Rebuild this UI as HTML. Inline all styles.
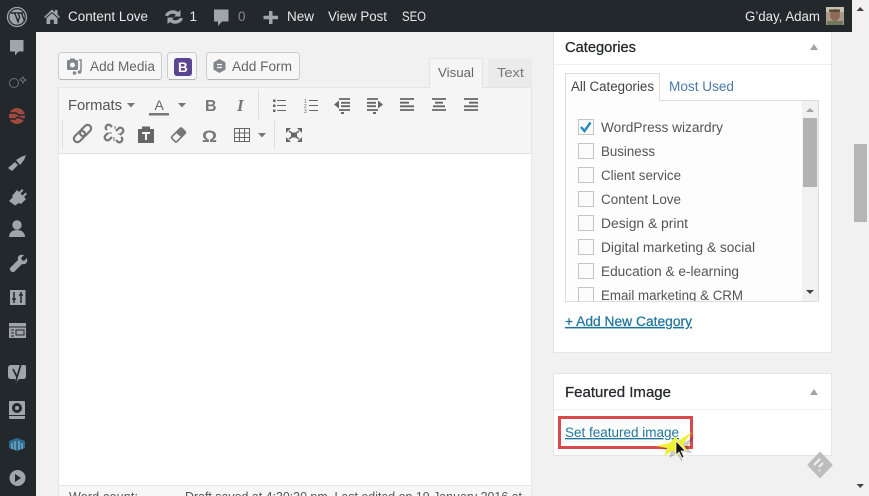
<!DOCTYPE html>
<html><head><meta charset="utf-8"><title>Edit Post</title>
<style>
html,body{margin:0;padding:0;width:869px;height:496px;overflow:hidden;background:#f1f1f1}
svg{display:block}
text{font-family:"Liberation Sans",sans-serif}
.bar{font-size:13.5px;fill:#e8e8e8}
.tx{font-size:13.5px;fill:#555}
.h{font-size:14.5px;fill:#23282d;stroke:#23282d;stroke-width:.25px}
.lnk{fill:#21759b}
</style></head><body>
<svg width="869" height="496" viewBox="0 0 869 496" xmlns="http://www.w3.org/2000/svg">
<rect width="869" height="496" fill="#f1f1f1"/>
<!-- scrollbar -->
<path d="M856.500 11h7.500l-3.700-4z" fill="#444"/>
<rect x="854" y="144" width="13" height="78" fill="#b5b5b5"/>
<path d="M856.500 484h7.500l-3.700 4z" fill="#444"/>

<!-- media buttons -->
<g fill="#f7f7f7" stroke="#cccccc">
<rect x="58.500" y="52.500" width="103" height="27" rx="3"/>
<rect x="167.500" y="52.500" width="29" height="27" rx="3"/>
<rect x="206.500" y="52.500" width="93" height="27" rx="3"/>
</g>
<path d="M60 79.500h100M169 79.500h26M208 79.500h90" stroke="#b5b5b5"/>
<rect x="67" y="60" width="11" height="10" rx="1" fill="#82878c"/>
<rect x="70" y="58.500" width="5" height="2" fill="#82878c"/>
<circle cx="72.500" cy="65" r="2.500" fill="#f7f7f7"/>
<path d="M79 60h2v11.500" stroke="#82878c" stroke-width="1.500" fill="none"/>
<circle cx="79.500" cy="72" r="1.800" fill="#82878c"/><circle cx="74.500" cy="73" r="1.800" fill="#82878c"/>
<text x="90" y="71" font-size="13.500" fill="#666" textLength="65" lengthAdjust="spacingAndGlyphs">Add Media</text>
<rect x="174" y="58" width="18" height="18" rx="3" fill="#5b4491"/>
<text x="178" y="72" font-size="13.500" font-weight="bold" fill="#fff">B</text>
<path d="M219.500 59l6 3.400v7.200l-6 3.400-6-3.400v-7.200z" fill="#82878c"/>
<path d="M217 64.500h5M217 67.500h5" stroke="#f7f7f7" stroke-width="1.300"/>
<text x="232" y="71" font-size="13.500" fill="#666" textLength="60" lengthAdjust="spacingAndGlyphs">Add Form</text>

<!-- editor tabs -->
<rect x="488" y="58" width="44" height="29" fill="#ebebeb"/>
<text x="497" y="77" font-size="13" fill="#777" textLength="27" lengthAdjust="spacingAndGlyphs">Text</text>
<!-- editor -->
<rect x="58.500" y="87.500" width="473" height="420" fill="#fff" stroke="#e5e5e5"/>
<rect x="59" y="88" width="472" height="65" fill="#f5f5f5"/>
<path d="M59 153.500h472" stroke="#e2e2e2"/>
<path d="M429.500 87V58.500h53V87" fill="#f5f5f5" stroke="#e5e5e5"/>
<rect x="430" y="85" width="52" height="4" fill="#f5f5f5"/>
<text x="438" y="77" font-size="13" fill="#666" textLength="36" lengthAdjust="spacingAndGlyphs">Visual</text>
<!-- toolbar dividers -->
<path d="M258.500 90v29M62.500 121v28M274.500 121v28" stroke="#dedede"/>
<!-- row 1 -->
<text x="68" y="110" font-size="14.500" fill="#555" textLength="54" lengthAdjust="spacingAndGlyphs">Formats</text>
<path d="M127 103h8l-4 4.500zM178 103h8l-4 4.500z" fill="#777"/>
<text x="154.500" y="110" font-size="14" fill="#666">A</text>
<rect x="149" y="113" width="20" height="2.500" fill="#777"/>
<text x="205" y="111" font-size="16" font-weight="bold" fill="#777">B</text>
<text x="237" y="111" font-size="17" font-weight="bold" font-style="italic" fill="#777" style="font-family:'Liberation Serif',serif">I</text>
<g stroke="#666" stroke-width="1" fill="none">
<path d="M277 100.500h9M277 105.500h9M277 110.500h9M309 100.500h9M309 105.500h9M309 110.500h9"/></g>
<path d="M273 99.500h2.500v2.500H273zM273 104.500h2.500v2.500H273zM273 109.500h2.500v2.500H273z" fill="#666"/>
<text x="304" y="103" font-size="5" fill="#666">1</text><text x="304" y="108" font-size="5" fill="#666">2</text><text x="304" y="113" font-size="5" fill="#666">3</text>
<g stroke="#666" stroke-width="1.800" fill="none">
<path d="M339 99h11M341 102.800h9M341 106.200h9M339 110h11"/>
<path d="M367 99h11M367 102.800h9M367 106.200h9M367 110h11"/>
<path d="M400 99h14M400 102.700h9M400 106.300h14M400 110h14"/>
<path d="M432 99h14M435 102.700h8M433 106.300h12M432 110h14"/>
<path d="M464 99h14M469 102.700h9M464 106.300h14M464 110h14"/>
</g>
<path d="M334 104.500l5-4v8zM383 104.500l-5-4v8zM341 112h3v2h-3zM373 112h3v2h-3z" fill="#666"/>
<!-- row 2 -->
<g fill="none" stroke="#777" stroke-width="2.200">
<rect x="73" y="133" width="13" height="7" rx="3.500" transform="rotate(-45 79.500 136.500)"/>
<rect x="79" y="127" width="13" height="7" rx="3.500" transform="rotate(-45 85.500 130.500)"/>
<path d="M108 130l-1-1a3 3 0 0 1 4-4l2 2M122 137l1 1a3 3 0 0 1-4 4l-2-2M113 137l-3 3a3 3 0 0 1-4-4l3-3M117 131l3-3a3 3 0 0 1 4 4l-3 3" transform="translate(-1,0)"/>
</g>
<path d="M112 133h-4M115 129v-3M118 134h4M114 137v4" stroke="#777" stroke-width="1"/>
<path d="M138 129h4v-2.500h8V129h4v14h-16z" fill="#666"/>
<path d="M142 132h8v2h-3v6h-2v-6h-3z" fill="#f5f5f5"/>
<path d="M172 136.500l8-8a1.500 1.500 0 0 1 2 0l3 3a1.500 1.500 0 0 1 0 2l-8 8a1.500 1.500 0 0 1-2 0l-3-3a1.500 1.500 0 0 1 0-2z" fill="none" stroke="#777" stroke-width="1.600"/>
<path d="M176 133l5-5 5 4-5 5z" fill="#777"/>
<text x="202" y="142" font-size="17" fill="#777" font-weight="bold" style="font-family:'Liberation Sans',sans-serif" textLength="15" lengthAdjust="spacingAndGlyphs">Ω</text>
<g fill="none" stroke="#666" stroke-width="1"><rect x="234.500" y="128.500" width="15" height="13"/><path d="M234 133h16M234 137.500h16M239.500 128v14M244.500 128v14"/></g>
<path d="M258 133h8l-4 4.500z" fill="#777"/>
<path d="M286 128h5l-5 5zM302 128h-5l5 5zM286 142h5l-5-5zM302 142h-5l5-5z" fill="#666"/>
<path d="M289 131l4 3M299 131l-4 3M289 139l4-3M299 139l-4-3" stroke="#666" stroke-width="1.500"/>
<rect x="291" y="132.500" width="6" height="5" fill="#666"/>
<!-- word count -->
<rect x="59" y="486" width="472" height="10" fill="#f7f7f7"/>
<path d="M59 485.500h472" stroke="#e5e5e5"/>
<text x="69" y="501" font-size="12.500" fill="#555" textLength="69">Word count:</text>
<text x="185" y="501" font-size="12.500" fill="#555" textLength="337" lengthAdjust="spacingAndGlyphs">Draft saved at 4:30:30 pm. Last edited on 19 January 2016 at</text>

<!-- categories panel -->
<rect x="553.500" y="20" width="278" height="332.500" fill="#fff" stroke="#e5e5e5"/>
<path d="M554 64.500h277" stroke="#eeeeee"/>
<text class="h" x="565" y="52" textLength="71" lengthAdjust="spacingAndGlyphs">Categories</text>
<path d="M810 50h8l-4-6z" fill="#a0a5aa"/>
<!-- cat tabs -->
<rect x="565.500" y="100.500" width="253" height="201" fill="#fdfdfd" stroke="#dddddd"/>
<path d="M565.500 100.500V73.500h94v27" fill="#fdfdfd" stroke="#dddddd"/>
<rect x="566" y="99" width="93" height="3" fill="#fdfdfd"/>
<text x="571" y="91" class="tx" style="fill:#444" textLength="83" lengthAdjust="spacingAndGlyphs">All Categories</text>
<text x="669" y="91" font-size="13.500" fill="#4a7aa5" textLength="65" lengthAdjust="spacingAndGlyphs">Most Used</text>
<!-- list scrollbar -->
<rect x="802" y="101" width="16" height="200" fill="#f1f1f1"/>
<path d="M806 112h8l-4-4z" fill="#a0a5aa"/>
<rect x="803" y="118" width="14" height="69" fill="#b3b3b3"/>
<path d="M806 290h8l-4 4z" fill="#444"/>
<!-- items -->
<g fill="#fbfbfb" stroke="#c4c4c4">
<rect x="578.500" y="119.500" width="15" height="15"/>
<rect x="578.500" y="143.500" width="15" height="15"/>
<rect x="578.500" y="167.500" width="15" height="15"/>
<rect x="578.500" y="191.500" width="15" height="15"/>
<rect x="578.500" y="215.500" width="15" height="15"/>
<rect x="578.500" y="239.500" width="15" height="15"/>
<rect x="578.500" y="263.500" width="15" height="15"/>
<rect x="578.500" y="287.500" width="15" height="15"/>
</g>
<path d="M581 127l3.500 4 6-8.500" stroke="#1e8cbe" stroke-width="2.400" fill="none"/>
<text class="tx" x="601" y="132" textLength="122" lengthAdjust="spacingAndGlyphs">WordPress wizardry</text>
<text class="tx" x="601" y="156" textLength="54" lengthAdjust="spacingAndGlyphs">Business</text>
<text class="tx" x="601" y="180" textLength="80" lengthAdjust="spacingAndGlyphs">Client service</text>
<text class="tx" x="601" y="204" textLength="80" lengthAdjust="spacingAndGlyphs">Content Love</text>
<text class="tx" x="601" y="228" textLength="87" lengthAdjust="spacingAndGlyphs">Design &amp; print</text>
<text class="tx" x="601" y="252" textLength="154" lengthAdjust="spacingAndGlyphs">Digital marketing &amp; social</text>
<text class="tx" x="601" y="276" textLength="138" lengthAdjust="spacingAndGlyphs">Education &amp; e-learning</text>
<text class="tx" x="601" y="300" textLength="142" lengthAdjust="spacingAndGlyphs">Email marketing &amp; CRM</text>
<rect x="566" y="302" width="252" height="8" fill="#fff"/>
<path d="M565.500 301.500h253" stroke="#dddddd"/>
<text x="565" y="326" font-size="13.500" class="lnk" text-decoration="underline" stroke="#21759b" stroke-width=".25" textLength="127" lengthAdjust="spacingAndGlyphs">+ Add New Category</text>

<!-- featured panel -->
<rect x="553.500" y="373.500" width="278" height="82" fill="#fff" stroke="#e5e5e5"/>
<path d="M554 409.500h277" stroke="#eeeeee"/>
<text class="h" x="565" y="397" textLength="106" lengthAdjust="spacingAndGlyphs">Featured Image</text>
<path d="M810 395h8l-4-6z" fill="#a0a5aa"/>
<text x="565" y="437" font-size="13.500" class="lnk" text-decoration="underline" textLength="114" lengthAdjust="spacingAndGlyphs">Set featured image</text>
<rect x="559.500" y="417.500" width="132" height="30" fill="none" stroke="#d9484a" stroke-width="3"/>
<!-- cursor highlight -->
<path d="M658 446l14-3 6-7 2 5 13-8-8 11 5 6-9-1-1 10-5-8-8 4 2-7z" fill="#00000033" transform="translate(2,3)"/>
<path d="M656 446l14-3 6-7 2 5 14-9-9 12 4 6-8-1-1 8-5-7-9 6 3-8z" fill="#f0f032"/>
<path d="M676 441v14l3-3 3 6 2-1-3-6h4.500z" fill="#111" stroke="#fff" stroke-width=".7"/>
<!-- feedly icon -->
<path d="M820 453l11.500 12-11.500 12-11.500-12z" fill="#bdbdbd" stroke="#bdbdbd" stroke-width="2" stroke-linejoin="round"/>
<path d="M820 459l-6 6M823 463l-4 4M820 470l-1 1" stroke="#f1f1f1" stroke-width="2"/>

<!-- sidebar and admin bar -->
<rect x="0" y="0" width="36" height="496" fill="#23282d"/>
<rect x="0" y="0" width="852" height="32" fill="#23282d"/>
<!-- WP logo -->
<circle cx="17" cy="17" r="9.500" fill="none" stroke="#a0a5aa" stroke-width="1.300"/>
<circle cx="17" cy="17" r="7.600" fill="#a0a5aa"/>
<path d="M10.800 13h5l-.8.800 3 8 1.600-4.800-1.200-3.200-.8-.8h5l-.8.800 3 8" fill="none" stroke="#23282d" stroke-width="1.400"/>
<!-- home -->
<path d="M44 17l8-7.500 3 2.800V10h2.500v4.600L60 17l-1 1-7-6-7 6z" fill="#a0a5aa"/>
<path d="M46.500 18l5.500-4.700 5.500 4.700v6h-3.700v-4.300h-3.600V24H46.500z" fill="#a0a5aa"/>
<text class="bar" x="68" y="21" textLength="80" lengthAdjust="spacingAndGlyphs">Content Love</text>
<!-- updates -->
<path d="M165 15.500a8 7 0 0 1 13-3.500l2.500-2v6.500h-6.500l2-1.700a5 4 0 0 0-8 1.500zM183 18.500a8 7 0 0 1-13 3.500l-2.500 2v-6.500h6.500l-2 1.700a5 4 0 0 0 8-1.500z" fill="#a0a5aa"/>
<text class="bar" x="189.500" y="21">1</text>
<!-- comments -->
<path d="M214 9.500h14.500v12H222l-4 4.500v-4.500h-4z" fill="#a0a5aa"/>
<text class="bar" x="238" y="21" style="fill:#888">0</text>
<!-- new -->
<path d="M269 11h3.500v4.800h5.500v3.400h-5.500V24H269v-4.800h-5.500v-3.400H269z" fill="#a0a5aa"/>
<text class="bar" x="287" y="21" textLength="27" lengthAdjust="spacingAndGlyphs">New</text>
<text class="bar" x="328" y="21" textLength="59" lengthAdjust="spacingAndGlyphs">View Post</text>
<text class="bar" x="402" y="21" textLength="24" lengthAdjust="spacingAndGlyphs">SEO</text>
<text class="bar" x="745" y="21" textLength="75" lengthAdjust="spacingAndGlyphs">G’day, Adam</text>
<!-- avatar -->
<rect x="826" y="7" width="18" height="18" fill="#a89a86"/>
<rect x="826" y="7" width="18" height="5" fill="#c9c1b0"/>
<ellipse cx="835" cy="15" rx="5" ry="6" fill="#8c6a55"/>
<rect x="829" y="9.500" width="11" height="2.500" fill="#5b4a3e"/>
<rect x="827" y="21" width="16" height="4" fill="#6f7a5c"/>
<!-- sidebar icons -->
<path d="M10 40h13.500v11.500h-5l-3.500 4v-4h-5z" fill="#a0a5aa"/>
<g fill="none" stroke="#6c7175" stroke-width="1"><circle cx="14" cy="83" r="4.500"/><path d="M20 80l3-3 1 2 2 1-2 1-1 2-1-2z"/></g>
<circle cx="17" cy="116" r="8" fill="#a3493f"/>
<path d="M9 113h7l3 2h6M9 119h6l3-2 7 3" stroke="#23282d" stroke-width="1.500" fill="none"/>
<path d="M8 168l7-6 3 3-6 6zM16 160l5-3 5-2-2 5-4 5z" fill="#a0a5aa"/>
<path d="M9 203l4-4-1-1 5-6 2 2 3-3 1.500 1.500-3 3 2 2 3-3 1.500 1.500-3 3 2 2-5 5-2-1-4 2.500z" fill="#a0a5aa" transform="translate(0,-2)"/>
<circle cx="17" cy="225" r="4.700" fill="#a0a5aa"/>
<path d="M9 237c0-5 4-7 8-7s8 2 8 7z" fill="#a0a5aa"/>
<path d="M10 268l8-8c-1-4 2-6 6-5l-3 3 1 2 2 1 3-3c1 4-1 7-5 6l-8 8c-2 1-5-2-4-4z" fill="#a0a5aa"/>
<rect x="10" y="290" width="15.500" height="15" fill="#a0a5aa"/>
<path d="M14 292v11M21 292v11M12 299h4M19 295h4" stroke="#23282d" stroke-width="1.500"/>
<rect x="9" y="323" width="17" height="15" fill="#a0a5aa"/>
<path d="M9 327h17M11 330h3M16 330h8v5h-8zM11 333h3M11 336h3" stroke="#23282d" stroke-width="1" fill="none"/>
<path d="M8 368q0-3 3-3h14q1 0 1 3v8q0 3-3 3h-4l-3 4-1-4h-4q-3 0-3-3z" fill="#a0a5aa"/>
<path d="M13 369l4 8-1 5M21 364l-4 13" stroke="#23282d" stroke-width="1.700" fill="none"/>
<rect x="9" y="401" width="16" height="18" rx="1" fill="#a0a5aa"/>
<circle cx="17" cy="408" r="5" fill="#23282d"/><circle cx="17" cy="408" r="2" fill="#a0a5aa"/>
<rect x="9" y="415" width="16" height="1" fill="#23282d"/>
<path d="M9 441l8-3 8 3v7l-8 3-8-3z" fill="#2a6c90"/>
<path d="M12 443v6M15 441v9M19 441v9M22 443v6" stroke="#a3c6d8" stroke-width="1"/>
<circle cx="17.500" cy="478" r="8" fill="#a0a5aa"/>
<path d="M15 474l6 4-6 4z" fill="#23282d"/>
</svg>
</body></html>
